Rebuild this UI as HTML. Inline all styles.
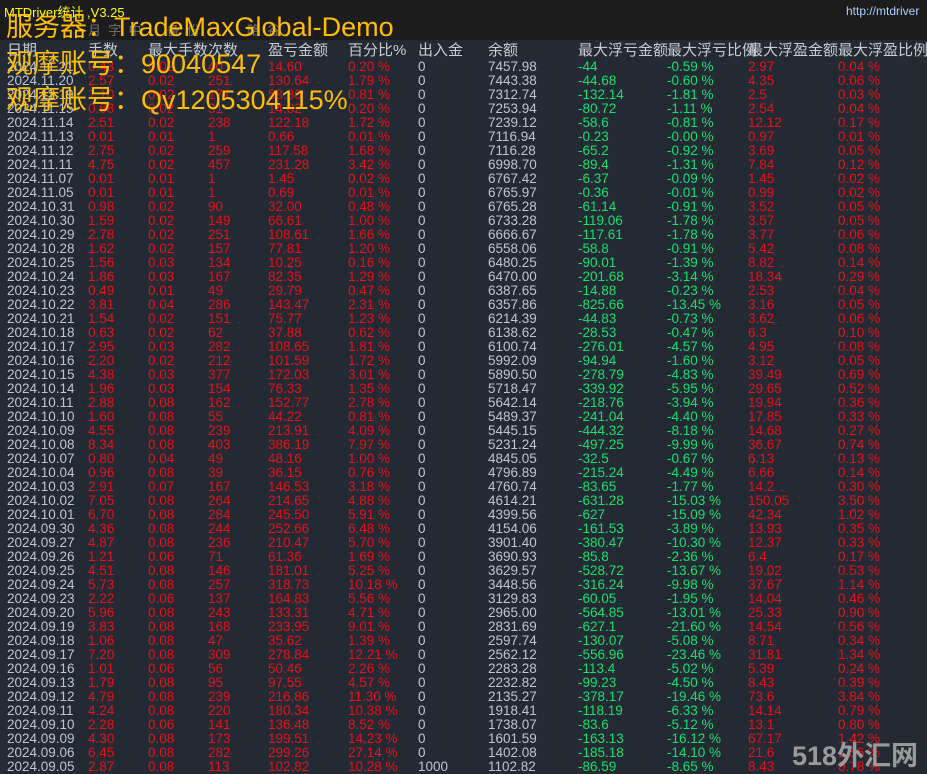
<!DOCTYPE html>
<html><head><meta charset="utf-8">
<style>
html,body{margin:0;padding:0;}
body{width:927px;height:773px;overflow:hidden;background:#242a33;position:relative;font-family:"Liberation Sans","Noto Sans CJK SC",sans-serif;}
#top{position:absolute;left:0;top:0;width:927px;height:40px;background:#1c1c1c;}
.t{position:absolute;white-space:nowrap;}
.r{position:absolute;left:0;width:927px;height:14px;font-size:13.5px;line-height:14px;}
.r span{position:absolute;top:0;white-space:nowrap;}
.c1{left:7px;color:#b9c6d6}
.c2{left:88px;color:#e8101a}
.c3{left:148px;color:#e8101a}
.c4{left:208px;color:#e8101a}
.c5{left:268px;color:#e8101a}
.c6{left:348px;color:#e8101a}
.c7{left:418px;color:#b9c6d6}
.c8{left:488px;color:#b9c6d6}
.c9{left:578px;color:#12e06e}
.c10{left:667px;color:#12e06e}
.c11{left:748px;color:#e8101a}
.c12{left:838px;color:#e8101a}
.h{position:absolute;top:42px;font-size:15px;color:#c4ccd6;white-space:nowrap;line-height:18px;}
.ov{position:absolute;color:#ffbf00;font-size:27px;line-height:30px;white-space:nowrap;font-family:"Liberation Sans","Noto Sans CJK SC",sans-serif;}
</style></head><body>
<div id="top"></div>
<div class="t" style="left:4px;top:2px;font-size:13px;color:#ffff00;">MTDriver统计 ,V3.25</div>
<div class="t" style="left:846px;top:4px;font-size:12px;color:#a8d0ff;">http://mtdriver</div>
<div class="t" style="left:88px;top:20px;font-size:13px;color:#707070;">月 &nbsp;字 &nbsp;中 &nbsp; &nbsp; &nbsp; 备 &nbsp;份 &nbsp; &nbsp; &nbsp; &nbsp; &nbsp; &nbsp; 略 &nbsp;谷</div>

<div class="h" style="left:7px">日期</div>
<div class="h" style="left:88px">手数</div>
<div class="h" style="left:148px">最大手数次数</div>
<div class="h" style="left:268px">盈亏金额</div>
<div class="h" style="left:348px">百分比%</div>
<div class="h" style="left:418px">出入金</div>
<div class="h" style="left:488px">余额</div>
<div class="h" style="left:578px">最大浮亏金额</div>
<div class="h" style="left:667px">最大浮亏比例</div>
<div class="h" style="left:748px">最大浮盈金额</div>
<div class="h" style="left:838px">最大浮盈比例</div>

<div class="r" style="top:60px"><span class="c1">2024.11.21</span><span class="c2">0.43</span><span class="c3">0.02</span><span class="c4">40</span><span class="c5">14.60</span><span class="c6">0.20 %</span><span class="c7">0</span><span class="c8">7457.98</span><span class="c9">-44</span><span class="c10">-0.59 %</span><span class="c11">2.97</span><span class="c12">0.04 %</span></div>
<div class="r" style="top:74px"><span class="c1">2024.11.20</span><span class="c2">2.57</span><span class="c3">0.02</span><span class="c4">251</span><span class="c5">130.64</span><span class="c6">1.79 %</span><span class="c7">0</span><span class="c8">7443.38</span><span class="c9">-44.68</span><span class="c10">-0.60 %</span><span class="c11">4.35</span><span class="c12">0.06 %</span></div>
<div class="r" style="top:88px"><span class="c1">2024.11.19</span><span class="c2">1.10</span><span class="c3">0.02</span><span class="c4">171</span><span class="c5">58.80</span><span class="c6">0.81 %</span><span class="c7">0</span><span class="c8">7312.74</span><span class="c9">-132.14</span><span class="c10">-1.81 %</span><span class="c11">2.5</span><span class="c12">0.03 %</span></div>
<div class="r" style="top:102px"><span class="c1">2024.11.15</span><span class="c2">0.68</span><span class="c3">0.02</span><span class="c4">31</span><span class="c5">14.82</span><span class="c6">0.20 %</span><span class="c7">0</span><span class="c8">7253.94</span><span class="c9">-80.72</span><span class="c10">-1.11 %</span><span class="c11">2.54</span><span class="c12">0.04 %</span></div>
<div class="r" style="top:116px"><span class="c1">2024.11.14</span><span class="c2">2.51</span><span class="c3">0.02</span><span class="c4">238</span><span class="c5">122.18</span><span class="c6">1.72 %</span><span class="c7">0</span><span class="c8">7239.12</span><span class="c9">-58.6</span><span class="c10">-0.81 %</span><span class="c11">12.12</span><span class="c12">0.17 %</span></div>
<div class="r" style="top:130px"><span class="c1">2024.11.13</span><span class="c2">0.01</span><span class="c3">0.01</span><span class="c4">1</span><span class="c5">0.66</span><span class="c6">0.01 %</span><span class="c7">0</span><span class="c8">7116.94</span><span class="c9">-0.23</span><span class="c10">-0.00 %</span><span class="c11">0.97</span><span class="c12">0.01 %</span></div>
<div class="r" style="top:144px"><span class="c1">2024.11.12</span><span class="c2">2.75</span><span class="c3">0.02</span><span class="c4">259</span><span class="c5">117.58</span><span class="c6">1.68 %</span><span class="c7">0</span><span class="c8">7116.28</span><span class="c9">-65.2</span><span class="c10">-0.92 %</span><span class="c11">3.69</span><span class="c12">0.05 %</span></div>
<div class="r" style="top:158px"><span class="c1">2024.11.11</span><span class="c2">4.75</span><span class="c3">0.02</span><span class="c4">457</span><span class="c5">231.28</span><span class="c6">3.42 %</span><span class="c7">0</span><span class="c8">6998.70</span><span class="c9">-89.4</span><span class="c10">-1.31 %</span><span class="c11">7.84</span><span class="c12">0.12 %</span></div>
<div class="r" style="top:172px"><span class="c1">2024.11.07</span><span class="c2">0.01</span><span class="c3">0.01</span><span class="c4">1</span><span class="c5">1.45</span><span class="c6">0.02 %</span><span class="c7">0</span><span class="c8">6767.42</span><span class="c9">-6.37</span><span class="c10">-0.09 %</span><span class="c11">1.45</span><span class="c12">0.02 %</span></div>
<div class="r" style="top:186px"><span class="c1">2024.11.05</span><span class="c2">0.01</span><span class="c3">0.01</span><span class="c4">1</span><span class="c5">0.69</span><span class="c6">0.01 %</span><span class="c7">0</span><span class="c8">6765.97</span><span class="c9">-0.36</span><span class="c10">-0.01 %</span><span class="c11">0.99</span><span class="c12">0.02 %</span></div>
<div class="r" style="top:200px"><span class="c1">2024.10.31</span><span class="c2">0.98</span><span class="c3">0.02</span><span class="c4">90</span><span class="c5">32.00</span><span class="c6">0.48 %</span><span class="c7">0</span><span class="c8">6765.28</span><span class="c9">-61.14</span><span class="c10">-0.91 %</span><span class="c11">3.52</span><span class="c12">0.05 %</span></div>
<div class="r" style="top:214px"><span class="c1">2024.10.30</span><span class="c2">1.59</span><span class="c3">0.02</span><span class="c4">149</span><span class="c5">66.61</span><span class="c6">1.00 %</span><span class="c7">0</span><span class="c8">6733.28</span><span class="c9">-119.06</span><span class="c10">-1.78 %</span><span class="c11">3.57</span><span class="c12">0.05 %</span></div>
<div class="r" style="top:228px"><span class="c1">2024.10.29</span><span class="c2">2.78</span><span class="c3">0.02</span><span class="c4">251</span><span class="c5">108.61</span><span class="c6">1.66 %</span><span class="c7">0</span><span class="c8">6666.67</span><span class="c9">-117.61</span><span class="c10">-1.78 %</span><span class="c11">3.77</span><span class="c12">0.06 %</span></div>
<div class="r" style="top:242px"><span class="c1">2024.10.28</span><span class="c2">1.62</span><span class="c3">0.02</span><span class="c4">157</span><span class="c5">77.81</span><span class="c6">1.20 %</span><span class="c7">0</span><span class="c8">6558.06</span><span class="c9">-58.8</span><span class="c10">-0.91 %</span><span class="c11">5.42</span><span class="c12">0.08 %</span></div>
<div class="r" style="top:256px"><span class="c1">2024.10.25</span><span class="c2">1.56</span><span class="c3">0.03</span><span class="c4">134</span><span class="c5">10.25</span><span class="c6">0.16 %</span><span class="c7">0</span><span class="c8">6480.25</span><span class="c9">-90.01</span><span class="c10">-1.39 %</span><span class="c11">8.82</span><span class="c12">0.14 %</span></div>
<div class="r" style="top:270px"><span class="c1">2024.10.24</span><span class="c2">1.86</span><span class="c3">0.03</span><span class="c4">167</span><span class="c5">82.35</span><span class="c6">1.29 %</span><span class="c7">0</span><span class="c8">6470.00</span><span class="c9">-201.68</span><span class="c10">-3.14 %</span><span class="c11">18.34</span><span class="c12">0.29 %</span></div>
<div class="r" style="top:284px"><span class="c1">2024.10.23</span><span class="c2">0.49</span><span class="c3">0.01</span><span class="c4">49</span><span class="c5">29.79</span><span class="c6">0.47 %</span><span class="c7">0</span><span class="c8">6387.65</span><span class="c9">-14.88</span><span class="c10">-0.23 %</span><span class="c11">2.53</span><span class="c12">0.04 %</span></div>
<div class="r" style="top:298px"><span class="c1">2024.10.22</span><span class="c2">3.81</span><span class="c3">0.04</span><span class="c4">286</span><span class="c5">143.47</span><span class="c6">2.31 %</span><span class="c7">0</span><span class="c8">6357.86</span><span class="c9">-825.66</span><span class="c10">-13.45 %</span><span class="c11">3.16</span><span class="c12">0.05 %</span></div>
<div class="r" style="top:312px"><span class="c1">2024.10.21</span><span class="c2">1.54</span><span class="c3">0.02</span><span class="c4">151</span><span class="c5">75.77</span><span class="c6">1.23 %</span><span class="c7">0</span><span class="c8">6214.39</span><span class="c9">-44.83</span><span class="c10">-0.73 %</span><span class="c11">3.62</span><span class="c12">0.06 %</span></div>
<div class="r" style="top:326px"><span class="c1">2024.10.18</span><span class="c2">0.63</span><span class="c3">0.02</span><span class="c4">62</span><span class="c5">37.88</span><span class="c6">0.62 %</span><span class="c7">0</span><span class="c8">6138.62</span><span class="c9">-28.53</span><span class="c10">-0.47 %</span><span class="c11">6.3</span><span class="c12">0.10 %</span></div>
<div class="r" style="top:340px"><span class="c1">2024.10.17</span><span class="c2">2.95</span><span class="c3">0.03</span><span class="c4">282</span><span class="c5">108.65</span><span class="c6">1.81 %</span><span class="c7">0</span><span class="c8">6100.74</span><span class="c9">-276.01</span><span class="c10">-4.57 %</span><span class="c11">4.95</span><span class="c12">0.08 %</span></div>
<div class="r" style="top:354px"><span class="c1">2024.10.16</span><span class="c2">2.20</span><span class="c3">0.02</span><span class="c4">212</span><span class="c5">101.59</span><span class="c6">1.72 %</span><span class="c7">0</span><span class="c8">5992.09</span><span class="c9">-94.94</span><span class="c10">-1.60 %</span><span class="c11">3.12</span><span class="c12">0.05 %</span></div>
<div class="r" style="top:368px"><span class="c1">2024.10.15</span><span class="c2">4.38</span><span class="c3">0.03</span><span class="c4">377</span><span class="c5">172.03</span><span class="c6">3.01 %</span><span class="c7">0</span><span class="c8">5890.50</span><span class="c9">-278.79</span><span class="c10">-4.83 %</span><span class="c11">39.49</span><span class="c12">0.69 %</span></div>
<div class="r" style="top:382px"><span class="c1">2024.10.14</span><span class="c2">1.96</span><span class="c3">0.03</span><span class="c4">154</span><span class="c5">76.33</span><span class="c6">1.35 %</span><span class="c7">0</span><span class="c8">5718.47</span><span class="c9">-339.92</span><span class="c10">-5.95 %</span><span class="c11">29.65</span><span class="c12">0.52 %</span></div>
<div class="r" style="top:396px"><span class="c1">2024.10.11</span><span class="c2">2.88</span><span class="c3">0.08</span><span class="c4">162</span><span class="c5">152.77</span><span class="c6">2.78 %</span><span class="c7">0</span><span class="c8">5642.14</span><span class="c9">-218.76</span><span class="c10">-3.94 %</span><span class="c11">19.94</span><span class="c12">0.36 %</span></div>
<div class="r" style="top:410px"><span class="c1">2024.10.10</span><span class="c2">1.60</span><span class="c3">0.08</span><span class="c4">55</span><span class="c5">44.22</span><span class="c6">0.81 %</span><span class="c7">0</span><span class="c8">5489.37</span><span class="c9">-241.04</span><span class="c10">-4.40 %</span><span class="c11">17.85</span><span class="c12">0.33 %</span></div>
<div class="r" style="top:424px"><span class="c1">2024.10.09</span><span class="c2">4.55</span><span class="c3">0.08</span><span class="c4">239</span><span class="c5">213.91</span><span class="c6">4.09 %</span><span class="c7">0</span><span class="c8">5445.15</span><span class="c9">-444.32</span><span class="c10">-8.18 %</span><span class="c11">14.68</span><span class="c12">0.27 %</span></div>
<div class="r" style="top:438px"><span class="c1">2024.10.08</span><span class="c2">8.34</span><span class="c3">0.08</span><span class="c4">403</span><span class="c5">386.19</span><span class="c6">7.97 %</span><span class="c7">0</span><span class="c8">5231.24</span><span class="c9">-497.25</span><span class="c10">-9.99 %</span><span class="c11">36.67</span><span class="c12">0.74 %</span></div>
<div class="r" style="top:452px"><span class="c1">2024.10.07</span><span class="c2">0.80</span><span class="c3">0.04</span><span class="c4">49</span><span class="c5">48.16</span><span class="c6">1.00 %</span><span class="c7">0</span><span class="c8">4845.05</span><span class="c9">-32.5</span><span class="c10">-0.67 %</span><span class="c11">6.13</span><span class="c12">0.13 %</span></div>
<div class="r" style="top:466px"><span class="c1">2024.10.04</span><span class="c2">0.96</span><span class="c3">0.08</span><span class="c4">39</span><span class="c5">36.15</span><span class="c6">0.76 %</span><span class="c7">0</span><span class="c8">4796.89</span><span class="c9">-215.24</span><span class="c10">-4.49 %</span><span class="c11">6.66</span><span class="c12">0.14 %</span></div>
<div class="r" style="top:480px"><span class="c1">2024.10.03</span><span class="c2">2.91</span><span class="c3">0.07</span><span class="c4">167</span><span class="c5">146.53</span><span class="c6">3.18 %</span><span class="c7">0</span><span class="c8">4760.74</span><span class="c9">-83.65</span><span class="c10">-1.77 %</span><span class="c11">14.2</span><span class="c12">0.30 %</span></div>
<div class="r" style="top:494px"><span class="c1">2024.10.02</span><span class="c2">7.05</span><span class="c3">0.08</span><span class="c4">264</span><span class="c5">214.65</span><span class="c6">4.88 %</span><span class="c7">0</span><span class="c8">4614.21</span><span class="c9">-631.28</span><span class="c10">-15.03 %</span><span class="c11">150.05</span><span class="c12">3.50 %</span></div>
<div class="r" style="top:508px"><span class="c1">2024.10.01</span><span class="c2">6.70</span><span class="c3">0.08</span><span class="c4">284</span><span class="c5">245.50</span><span class="c6">5.91 %</span><span class="c7">0</span><span class="c8">4399.56</span><span class="c9">-627</span><span class="c10">-15.09 %</span><span class="c11">42.34</span><span class="c12">1.02 %</span></div>
<div class="r" style="top:522px"><span class="c1">2024.09.30</span><span class="c2">4.36</span><span class="c3">0.08</span><span class="c4">244</span><span class="c5">252.66</span><span class="c6">6.48 %</span><span class="c7">0</span><span class="c8">4154.06</span><span class="c9">-161.53</span><span class="c10">-3.89 %</span><span class="c11">13.93</span><span class="c12">0.35 %</span></div>
<div class="r" style="top:536px"><span class="c1">2024.09.27</span><span class="c2">4.87</span><span class="c3">0.08</span><span class="c4">236</span><span class="c5">210.47</span><span class="c6">5.70 %</span><span class="c7">0</span><span class="c8">3901.40</span><span class="c9">-380.47</span><span class="c10">-10.30 %</span><span class="c11">12.37</span><span class="c12">0.33 %</span></div>
<div class="r" style="top:550px"><span class="c1">2024.09.26</span><span class="c2">1.21</span><span class="c3">0.06</span><span class="c4">71</span><span class="c5">61.36</span><span class="c6">1.69 %</span><span class="c7">0</span><span class="c8">3690.93</span><span class="c9">-85.8</span><span class="c10">-2.36 %</span><span class="c11">6.4</span><span class="c12">0.17 %</span></div>
<div class="r" style="top:564px"><span class="c1">2024.09.25</span><span class="c2">4.51</span><span class="c3">0.08</span><span class="c4">146</span><span class="c5">181.01</span><span class="c6">5.25 %</span><span class="c7">0</span><span class="c8">3629.57</span><span class="c9">-528.72</span><span class="c10">-13.67 %</span><span class="c11">19.02</span><span class="c12">0.53 %</span></div>
<div class="r" style="top:578px"><span class="c1">2024.09.24</span><span class="c2">5.73</span><span class="c3">0.08</span><span class="c4">257</span><span class="c5">318.73</span><span class="c6">10.18 %</span><span class="c7">0</span><span class="c8">3448.56</span><span class="c9">-316.24</span><span class="c10">-9.98 %</span><span class="c11">37.67</span><span class="c12">1.14 %</span></div>
<div class="r" style="top:592px"><span class="c1">2024.09.23</span><span class="c2">2.22</span><span class="c3">0.06</span><span class="c4">137</span><span class="c5">164.83</span><span class="c6">5.56 %</span><span class="c7">0</span><span class="c8">3129.83</span><span class="c9">-60.05</span><span class="c10">-1.95 %</span><span class="c11">14.04</span><span class="c12">0.46 %</span></div>
<div class="r" style="top:606px"><span class="c1">2024.09.20</span><span class="c2">5.96</span><span class="c3">0.08</span><span class="c4">243</span><span class="c5">133.31</span><span class="c6">4.71 %</span><span class="c7">0</span><span class="c8">2965.00</span><span class="c9">-564.85</span><span class="c10">-13.01 %</span><span class="c11">25.33</span><span class="c12">0.90 %</span></div>
<div class="r" style="top:620px"><span class="c1">2024.09.19</span><span class="c2">3.83</span><span class="c3">0.08</span><span class="c4">168</span><span class="c5">233.95</span><span class="c6">9.01 %</span><span class="c7">0</span><span class="c8">2831.69</span><span class="c9">-627.1</span><span class="c10">-21.60 %</span><span class="c11">14.54</span><span class="c12">0.56 %</span></div>
<div class="r" style="top:634px"><span class="c1">2024.09.18</span><span class="c2">1.06</span><span class="c3">0.08</span><span class="c4">47</span><span class="c5">35.62</span><span class="c6">1.39 %</span><span class="c7">0</span><span class="c8">2597.74</span><span class="c9">-130.07</span><span class="c10">-5.08 %</span><span class="c11">8.71</span><span class="c12">0.34 %</span></div>
<div class="r" style="top:648px"><span class="c1">2024.09.17</span><span class="c2">7.20</span><span class="c3">0.08</span><span class="c4">309</span><span class="c5">278.84</span><span class="c6">12.21 %</span><span class="c7">0</span><span class="c8">2562.12</span><span class="c9">-556.96</span><span class="c10">-23.46 %</span><span class="c11">31.81</span><span class="c12">1.34 %</span></div>
<div class="r" style="top:662px"><span class="c1">2024.09.16</span><span class="c2">1.01</span><span class="c3">0.06</span><span class="c4">56</span><span class="c5">50.46</span><span class="c6">2.26 %</span><span class="c7">0</span><span class="c8">2283.28</span><span class="c9">-113.4</span><span class="c10">-5.02 %</span><span class="c11">5.39</span><span class="c12">0.24 %</span></div>
<div class="r" style="top:676px"><span class="c1">2024.09.13</span><span class="c2">1.79</span><span class="c3">0.08</span><span class="c4">95</span><span class="c5">97.55</span><span class="c6">4.57 %</span><span class="c7">0</span><span class="c8">2232.82</span><span class="c9">-99.23</span><span class="c10">-4.50 %</span><span class="c11">8.43</span><span class="c12">0.39 %</span></div>
<div class="r" style="top:690px"><span class="c1">2024.09.12</span><span class="c2">4.79</span><span class="c3">0.08</span><span class="c4">239</span><span class="c5">216.86</span><span class="c6">11.30 %</span><span class="c7">0</span><span class="c8">2135.27</span><span class="c9">-378.17</span><span class="c10">-19.46 %</span><span class="c11">73.6</span><span class="c12">3.84 %</span></div>
<div class="r" style="top:704px"><span class="c1">2024.09.11</span><span class="c2">4.24</span><span class="c3">0.08</span><span class="c4">220</span><span class="c5">180.34</span><span class="c6">10.38 %</span><span class="c7">0</span><span class="c8">1918.41</span><span class="c9">-118.19</span><span class="c10">-6.33 %</span><span class="c11">14.14</span><span class="c12">0.79 %</span></div>
<div class="r" style="top:718px"><span class="c1">2024.09.10</span><span class="c2">2.28</span><span class="c3">0.06</span><span class="c4">141</span><span class="c5">136.48</span><span class="c6">8.52 %</span><span class="c7">0</span><span class="c8">1738.07</span><span class="c9">-83.6</span><span class="c10">-5.12 %</span><span class="c11">13.1</span><span class="c12">0.80 %</span></div>
<div class="r" style="top:732px"><span class="c1">2024.09.09</span><span class="c2">4.30</span><span class="c3">0.08</span><span class="c4">173</span><span class="c5">199.51</span><span class="c6">14.23 %</span><span class="c7">0</span><span class="c8">1601.59</span><span class="c9">-163.13</span><span class="c10">-16.12 %</span><span class="c11">67.17</span><span class="c12">1.42 %</span></div>
<div class="r" style="top:746px"><span class="c1">2024.09.06</span><span class="c2">6.45</span><span class="c3">0.08</span><span class="c4">282</span><span class="c5">299.26</span><span class="c6">27.14 %</span><span class="c7">0</span><span class="c8">1402.08</span><span class="c9">-185.18</span><span class="c10">-14.10 %</span><span class="c11">21.6</span><span class="c12">1.56 %</span></div>
<div class="r" style="top:760px"><span class="c1">2024.09.05</span><span class="c2">2.87</span><span class="c3">0.08</span><span class="c4">113</span><span class="c5">102.82</span><span class="c6">10.28 %</span><span class="c7">1000</span><span class="c8">1102.82</span><span class="c9">-86.59</span><span class="c10">-8.65 %</span><span class="c11">8.43</span><span class="c12">0.78 %</span></div>

<div class="ov" style="left:6px;top:12px;">服务器：TradeMaxGlobal-Demo</div>
<div class="ov" style="left:6px;top:49px;">观摩账号：90040547</div>
<div class="ov" style="left:6px;top:85px;">观摩账号：Qv1205304115%</div>

<div class="t" style="left:792px;top:734px;font-size:27px;font-weight:bold;color:#9a9a9a;font-family:'Liberation Sans','Noto Sans CJK SC',sans-serif;">518外汇网</div>
</body></html>
